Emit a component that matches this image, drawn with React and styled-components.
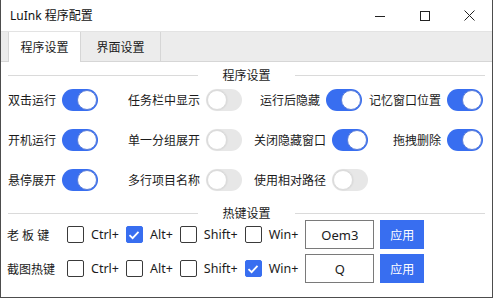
import React from "react";
import styled, { createGlobalStyle } from "styled-components";

const GlobalStyle = createGlobalStyle`
  * { box-sizing: border-box; }
  body {
    margin: 0;
    background: #ffffff;
    font-family: "Noto Sans", "Noto Sans CJK SC", sans-serif;
    color: #1b1b1b;
  }
`;

const BLUE = "#386ef0";

const Window = styled.div`
  width: 493px;
  height: 298px;
  background: #fff;
  border: 1px solid #4d4d4d;
  border-top: none;
  display: flex;
  flex-direction: column;
  overflow: hidden;
`;

const TitleBar = styled.div`
  height: 31px;
  display: flex;
  align-items: center;
  flex-shrink: 0;
`;

const Title = styled.div`
  flex: 1;
  padding-left: 9px;
  font-size: 12px;
  line-height: 16px;
  color: #111;
`;

const WinButton = styled.div`
  width: 45px;
  height: 31px;
  display: flex;
  align-items: center;
  justify-content: center;
  color: #222;
`;

const TabStrip = styled.div`
  height: 31px;
  flex-shrink: 0;
  background: #ececec;
  border-top: 1px solid #e3e3e3;
  border-bottom: 1px solid #d6d6d6;
  display: flex;
  padding-left: 7px;
`;

const Tab = styled.div`
  width: ${(p) => p.$w}px;
  display: flex;
  align-items: center;
  justify-content: center;
  font-size: 12px;
  background: ${(p) => (p.$active ? "#ffffff" : "transparent")};
  border-left: ${(p) => (p.$active ? "1px solid #d6d6d6" : "none")};
  border-right: 1px solid #d6d6d6;
  margin-bottom: ${(p) => (p.$active ? "-1px" : "0")};
  color: #1b1b1b;
`;

const Content = styled.div`
  flex: 1;
  display: flex;
  flex-direction: column;
`;

const SectionHeader = styled.div`
  display: grid;
  grid-template-columns: 1fr auto 1fr;
  align-items: center;
  column-gap: 24px;
  height: 14px;
  margin-top: ${(p) => p.$top}px;
  padding: 0 7px 0 7px;
  font-size: 12px;
`;

const Line = styled.div`
  height: 1px;
  background: #dadada;
`;

const ToggleGrid = styled.div`
  display: grid;
  grid-template-columns: 97px 144px 126px 115px;
  grid-auto-rows: 40px;
`;

const Cell = styled.div`
  display: flex;
  align-items: center;
  justify-content: flex-end;
  gap: 6px;
  padding-right: ${(p) => p.$pr || 0}px;
  font-size: 12px;
`;

const Track = styled.div`
  position: relative;
  width: 36px;
  height: 22px;
  border-radius: 11px;
  background: ${(p) => (p.$on ? BLUE : "#e7e7e7")};
  flex-shrink: 0;
`;

const Knob = styled.div`
  position: absolute;
  top: 1px;
  left: ${(p) => (p.$on ? "15px" : "1px")};
  width: 20px;
  height: 20px;
  border-radius: 50%;
  background: #fff;
  border: 1px solid ${(p) => (p.$on ? "#5d7fd8" : "#dcdcdc")};
  box-shadow: ${(p) => (p.$on ? "none" : "0 0 2px rgba(0,0,0,0.12)")};
`;

const Toggle = ({ on }) => (
  <Track $on={on}>
    <Knob $on={on} />
  </Track>
);

const HotkeyRow = styled.div`
  display: flex;
  align-items: center;
  gap: 7px;
  height: 29px;
  margin-top: ${(p) => p.$top}px;
  padding-left: 6px;
  font-size: 12px;
`;

const RowLabel = styled.div`
  width: 53px;
  white-space: pre;
`;

const Box = styled.div`
  width: 17px;
  height: 17px;
  border-radius: 2px;
  border: 1px solid ${(p) => (p.$on ? BLUE : "#3a3a3a")};
  background: ${(p) => (p.$on ? BLUE : "#fff")};
  display: flex;
  align-items: center;
  justify-content: center;
  flex-shrink: 0;
`;

const KeyText = styled.span`
  font-size: 12.5px;
  color: #1b1b1b;
`;

const KeyInput = styled.div`
  width: 69px;
  height: 29px;
  border: 1px solid #7a7a7a;
  display: flex;
  align-items: center;
  justify-content: center;
  font-size: 13px;
`;

const ApplyButton = styled.div`
  width: 44px;
  height: 29px;
  margin-left: -1px;
  background: ${BLUE};
  color: #fff;
  display: flex;
  align-items: center;
  justify-content: center;
  font-size: 12px;
`;

const Check = ({ on }) => (
  <Box $on={on}>
    {on && (
      <svg width="12" height="10" viewBox="0 0 12 10">
        <path d="M1.5 5.2 L4.6 8.2 L10.5 1.8" fill="none" stroke="#fff" strokeWidth="1.8" />
      </svg>
    )}
  </Box>
);

const toggles = [
  [["双击运行", true], ["任务栏中显示", false], ["运行后隐藏", true, 6], ["记忆窗口位置", true]],
  [["开机运行", true], ["单一分组展开", false], ["关闭隐藏窗口", true], ["拖拽删除", true]],
  [["悬停展开", true], ["多行项目名称", false], ["使用相对路径", false], null],
];

const hotkeys = [
  { label: "老 板 键", mods: [false, true, false, false], key: "Oem3", top: 2 },
  { label: "截图热键", mods: [false, false, false, true], key: "Q", top: 5 },
];

const modNames = ["Ctrl+", "Alt+", "Shift+", "Win+"];

export default function App() {
  return (
    <>
      <GlobalStyle />
      <Window>
        <TitleBar>
          <Title>LuInk 程序配置</Title>
          <WinButton>
            <svg width="10" height="10" viewBox="0 0 10 10">
              <path d="M0 5.5 H10" stroke="#222" strokeWidth="1" />
            </svg>
          </WinButton>
          <WinButton>
            <svg width="10" height="10" viewBox="0 0 10 10">
              <rect x="0.5" y="0.5" width="9" height="9" fill="none" stroke="#222" strokeWidth="1" />
            </svg>
          </WinButton>
          <WinButton>
            <svg width="11" height="11" viewBox="0 0 11 11">
              <path d="M0.5 0.5 L10.5 10.5 M10.5 0.5 L0.5 10.5" stroke="#222" strokeWidth="1" />
            </svg>
          </WinButton>
        </TitleBar>
        <TabStrip>
          <Tab $active $w={73}>程序设置</Tab>
          <Tab $w={80}>界面设置</Tab>
        </TabStrip>
        <Content>
          <SectionHeader $top={4}>
            <Line />
            <span>程序设置</span>
            <Line />
          </SectionHeader>
          <ToggleGrid>
            {toggles.flat().map((t, i) =>
              t ? (
                <Cell key={i} $pr={t[2]}>
                  <span>{t[0]}</span>
                  <Toggle on={t[1]} />
                </Cell>
              ) : (
                <Cell key={i} />
              )
            )}
          </ToggleGrid>
          <SectionHeader $top={4}>
            <Line />
            <span>热键设置</span>
            <Line />
          </SectionHeader>
          {hotkeys.map((h) => (
            <HotkeyRow key={h.label} $top={h.top}>
              <RowLabel>{h.label}</RowLabel>
              {modNames.map((m, i) => (
                <React.Fragment key={m}>
                  <Check on={h.mods[i]} />
                  <KeyText>{m}</KeyText>
                </React.Fragment>
              ))}
              <KeyInput>{h.key}</KeyInput>
              <ApplyButton>应用</ApplyButton>
            </HotkeyRow>
          ))}
        </Content>
      </Window>
    </>
  );
}
